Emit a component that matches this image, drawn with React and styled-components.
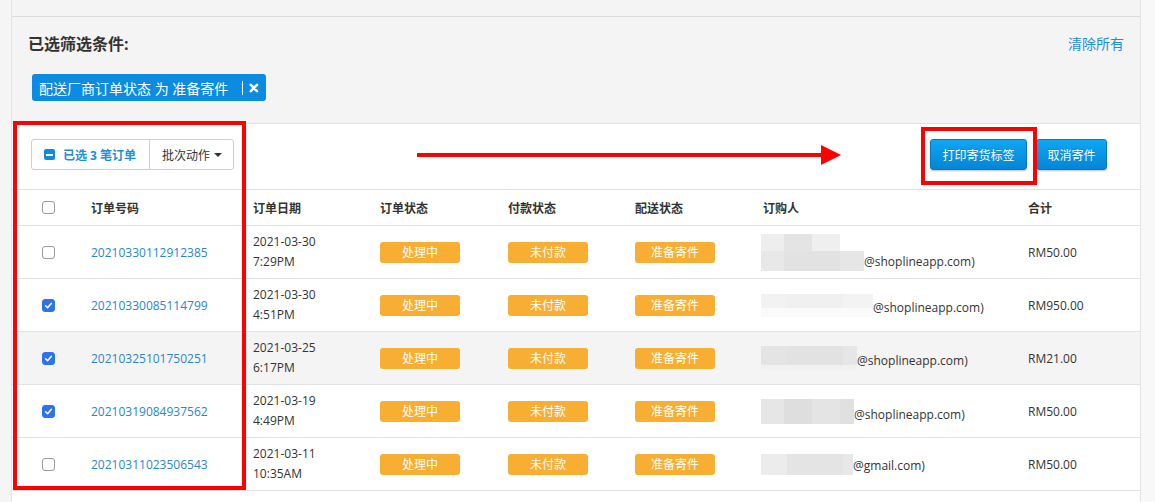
import React from 'react';
import styled, {createGlobalStyle} from 'styled-components';

const orders = [
    {
        id: '20210330112912385', date: '2021-03-30', time: '7:29PM', checked: false,
        blur: {w: 103, h: 37, bg: 'linear-gradient(90deg, #eeeeee 0 23px, #e4e4e4 23px 51px, #efefef 51px 79px, #ffffff 79px) top / 100% 17px no-repeat, linear-gradient(90deg, #e8e8e8 0 23px, #e2e2e2 23px 79px, #e6e6e6 79px) bottom / 100% 20px no-repeat'},
        email: '@shoplineapp.com)', total: 'RM50.00'
    },
    {
        id: '20210330085114799', date: '2021-03-30', time: '4:51PM', checked: true,
        blur: {w: 112, h: 23, bg: 'linear-gradient(90deg, #f2f2f2 0 26px, #f0f0f0 26px 82px, #f3f3f3 82px) top / 100% 14px no-repeat, #fafafa'},
        email: '@shoplineapp.com)', total: 'RM950.00'
    },
    {
        id: '20210325101750251', date: '2021-03-25', time: '6:17PM', checked: true, hover: true,
        blur: {w: 96, h: 24, bg: 'linear-gradient(90deg, #e4e4e4 0 26px, #e2e2e2 26px 82px, #e6e6e6 82px) top / 100% 19px no-repeat, #f1f1f1'},
        email: '@shoplineapp.com)', total: 'RM21.00'
    },
    {
        id: '20210319084937562', date: '2021-03-19', time: '4:49PM', checked: true,
        blur: {w: 93, h: 25, bg: 'linear-gradient(90deg, #e6e6e6 0 23px, #dedede 23px 51px, #e4e4e4 51px 79px, #e0e0e0 79px)'},
        email: '@shoplineapp.com)', total: 'RM50.00'
    },
    {
        id: '20210311023506543', date: '2021-03-11', time: '10:35AM', checked: false,
        blur: {w: 92, h: 21, bg: 'linear-gradient(90deg, #ececec 0 26px, #e4e4e4 26px 82px, #e8e8e8 82px)'},
        email: '@gmail.com)', total: 'RM50.00'
    },
];

const Checkbox = ({checked}) => (
    <Box $checked={checked}>
        {checked ?
            <svg width="9" height="9" viewBox="0 0 9 9">
                <path d="M1.6 4.7 L3.6 6.7 L7.4 2.3" fill="none" stroke="#fff" strokeWidth="1.5" strokeLinecap="round" strokeLinejoin="round"/>
            </svg> : null}
    </Box>
);

const App = () => {
    return (
        <Page>
            <GlobalStyle/>
            <LeftGutter/>
            <Panel>
                <TopStub/>
                <FilterSection>
                    <FilterHead>
                        <FilterTitle>已选筛选条件:</FilterTitle>
                        <ClearAll>清除所有</ClearAll>
                    </FilterHead>
                    <Tag>
                        <span>配送厂商订单状态 为 准备寄件</span>
                        <TagSep/>
                        <svg width="10" height="10" viewBox="0 0 10 10">
                            <path d="M1.8 1.8 L8.2 8.2 M8.2 1.8 L1.8 8.2" stroke="#fff" strokeWidth="2.6" strokeLinecap="round"/>
                        </svg>
                    </Tag>
                </FilterSection>

                <ListArea>
                    <Toolbar>
                        <BtnGroup>
                            <SelectedBtn>
                                <MinusBox/>
                                已选 3 笔订单
                            </SelectedBtn>
                            <ActionBtn>
                                批次动作
                                <Caret/>
                            </ActionBtn>
                        </BtnGroup>

                        <Arrow width="424" height="22" viewBox="0 0 424 22">
                            <rect x="0" y="9" width="406" height="4" fill="#ff0000"/>
                            <polygon points="404,1 424,11 404,21" fill="#ff0000"/>
                        </Arrow>

                        <Actions>
                            <Highlighted>
                                <PrimaryBtn $w={97}>打印寄货标签</PrimaryBtn>
                            </Highlighted>
                            <PrimaryBtn $w={71}>取消寄件</PrimaryBtn>
                        </Actions>
                    </Toolbar>

                    <HeadRow>
                        <Cell><Checkbox/></Cell>
                        <HeadCell>订单号码</HeadCell>
                        <HeadCell>订单日期</HeadCell>
                        <HeadCell>订单状态</HeadCell>
                        <HeadCell>付款状态</HeadCell>
                        <HeadCell>配送状态</HeadCell>
                        <HeadCell>订购人</HeadCell>
                        <HeadCell>合计</HeadCell>
                    </HeadRow>

                    {orders.map((o) => (
                        <Row key={o.id} $hover={o.hover}>
                            <Cell><Checkbox checked={o.checked}/></Cell>
                            <Cell><OrderLink>{o.id}</OrderLink></Cell>
                            <DateCell>{o.date}<br/>{o.time}</DateCell>
                            <Cell><Badge>处理中</Badge></Cell>
                            <Cell><Badge>未付款</Badge></Cell>
                            <Cell><Badge>准备寄件</Badge></Cell>
                            <BuyerCell>
                                <Buyer>
                                    <Blur $w={o.blur.w} $h={o.blur.h} $bg={o.blur.bg}/>
                                    <Email>{o.email}</Email>
                                </Buyer>
                            </BuyerCell>
                            <Cell>{o.total}</Cell>
                        </Row>
                    ))}

                    <ColumnMark/>
                </ListArea>
            </Panel>
            <RightGutter/>
        </Page>
    )
}

const GlobalStyle = createGlobalStyle`
    html, body {
        margin: 0;
        padding: 0;
        background: #f8f8f8;
    }
    body {
        font-family: "Open Sans", "Noto Sans CJK SC", sans-serif;
        color: #333;
    }
`

const Page = styled.div`
    display: flex;
    width: 1155px;
    height: 502px;
    overflow: hidden;
`

const LeftGutter = styled.div`
    width: 11px;
    flex-shrink: 0;
    background: #f5f5f5;
    border-right: 1px solid #e4e4e4;
`

const RightGutter = styled.div`
    flex: 1;
    background: #f8f8f8;
    border-left: 1px solid #e4e4e4;
`

const Panel = styled.div`
    width: 1128px;
    flex-shrink: 0;
    display: flex;
    flex-direction: column;
    background: #fff;
`

const TopStub = styled.div`
    height: 16px;
    background: #f4f4f4;
    border-bottom: 1px solid #dcdcdc;
`

const FilterSection = styled.div`
    height: 107px;
    box-sizing: border-box;
    padding: 16px 16px 0 16px;
    background: #f4f4f4;
    border-bottom: 1px solid #e2e2e2;
`

const FilterHead = styled.div`
    display: flex;
    justify-content: space-between;
    align-items: center;
    height: 20px;
`

const FilterTitle = styled.div`
    font-size: 16px;
    font-weight: bold;
    color: #333;
`

const ClearAll = styled.a`
    font-size: 14px;
    color: #1a8fdc;
    cursor: pointer;
`

const Tag = styled.div`
    display: inline-flex;
    align-items: center;
    margin: 21px 0 0 4px;
    height: 27px;
    width: 234px;
    box-sizing: border-box;
    padding: 0 7px;
    background: #0b8ce0;
    border-radius: 3px;
    color: #fff;
    font-size: 14px;
    white-space: nowrap;
`

const TagSep = styled.span`
    width: 1px;
    height: 14px;
    background: #fff;
    margin: 0 6px 0 14px;
`

const ListArea = styled.div`
    position: relative;
`

const Toolbar = styled.div`
    position: relative;
    display: flex;
    justify-content: space-between;
    align-items: flex-start;
    height: 66px;
    box-sizing: border-box;
    padding: 15px 33px 0 19px;
    border-bottom: 1px solid #e2e2e2;
`

const BtnGroup = styled.div`
    display: flex;
    height: 31px;
    border: 1px solid #cfcfcf;
    border-radius: 3px;
    box-sizing: border-box;
    font-size: 12px;
`

const SelectedBtn = styled.div`
    display: flex;
    align-items: center;
    gap: 8px;
    width: 118px;
    box-sizing: border-box;
    padding-left: 12px;
    color: #1a8fdc;
    font-weight: bold;
    border-right: 1px solid #cfcfcf;
`

const MinusBox = styled.span`
    position: relative;
    width: 11px;
    height: 11px;
    border-radius: 2px;
    background: #0b8ce0;

    &::after {
        content: '';
        position: absolute;
        left: 2px;
        top: 4.5px;
        width: 7px;
        height: 2px;
        background: #fff;
    }
`

const ActionBtn = styled.div`
    display: flex;
    align-items: center;
    gap: 4px;
    padding: 0 11px 0 12px;
    color: #333;
`

const Caret = styled.span`
    width: 0;
    height: 0;
    border-left: 4px solid transparent;
    border-right: 4px solid transparent;
    border-top: 4px solid #333;
`

const Arrow = styled.svg`
    position: absolute;
    left: 405px;
    top: 20px;
`

const Actions = styled.div`
    display: flex;
    gap: 9px;
`

const Highlighted = styled.div`
    position: relative;

    &::after {
        content: '';
        position: absolute;
        left: -9px;
        right: -10px;
        top: -12px;
        height: 58px;
        box-sizing: border-box;
        border: 4px solid #ff0000;
        pointer-events: none;
    }
`

const PrimaryBtn = styled.button`
    display: block;
    width: ${(p) => p.$w}px;
    height: 31px;
    padding: 0;
    font-family: "Open Sans", "Noto Sans CJK SC", sans-serif;
    font-size: 12px;
    color: #fff;
    background: linear-gradient(#0fa6f2, #0585d6);
    border: 1px solid #0678c6;
    border-radius: 3px;
    box-shadow: 0 1px 2px rgba(0,0,0,0.25);
    text-shadow: 0 -1px 0 rgba(0,0,0,0.15);
    cursor: pointer;
`

const columns = '49px 162px 127px 128px 127px 128px 265px 124px';

const HeadRow = styled.div`
    display: grid;
    grid-template-columns: ${columns};
    height: 35px;
    padding-left: 18px;
    border-bottom: 1px solid #e2e2e2;
    font-size: 12px;
    font-weight: 600;
`

const Row = styled.div`
    display: grid;
    grid-template-columns: ${columns};
    height: 52px;
    padding-left: 18px;
    border-bottom: 1px solid #e2e2e2;
    background: ${(p) => p.$hover ? '#f4f4f4' : '#fff'};
    font-size: 12px;
    color: #333;
`

const Cell = styled.div`
    display: flex;
    align-items: center;
    padding-left: 12px;
    white-space: nowrap;
`

const HeadCell = styled(Cell)`
    color: #333;
`

const DateCell = styled(Cell)`
    display: block;
    align-self: center;
    line-height: 20px;
`

const BuyerCell = styled(Cell)`
    padding-left: 10px;
`

const Buyer = styled.div`
    display: flex;
    align-items: flex-end;
`

const Blur = styled.span`
    display: inline-block;
    width: ${(p) => p.$w}px;
    height: ${(p) => p.$h}px;
    background: ${(p) => p.$bg};
`

const Email = styled.span`
    line-height: 18px;
`

const OrderLink = styled.a`
    color: #2a86cf;
    cursor: pointer;
`

const Badge = styled.span`
    display: inline-flex;
    justify-content: center;
    align-items: center;
    width: 80px;
    height: 21px;
    border-radius: 3px;
    background: #f8ae32;
    color: #fff;
    font-size: 12px;
`

const Box = styled.span`
    display: inline-flex;
    justify-content: center;
    align-items: center;
    width: 13px;
    height: 13px;
    box-sizing: border-box;
    border-radius: 3px;
    border: 1px solid ${(p) => p.$checked ? '#2f72ee' : '#9b9b9b'};
    background: ${(p) => p.$checked ? '#2f72ee' : '#fff'};
`

const ColumnMark = styled.div`
    position: absolute;
    left: 1px;
    top: -3px;
    width: 233px;
    height: 369px;
    box-sizing: border-box;
    border: 4px solid #ff0000;
    pointer-events: none;
`

export default App;
